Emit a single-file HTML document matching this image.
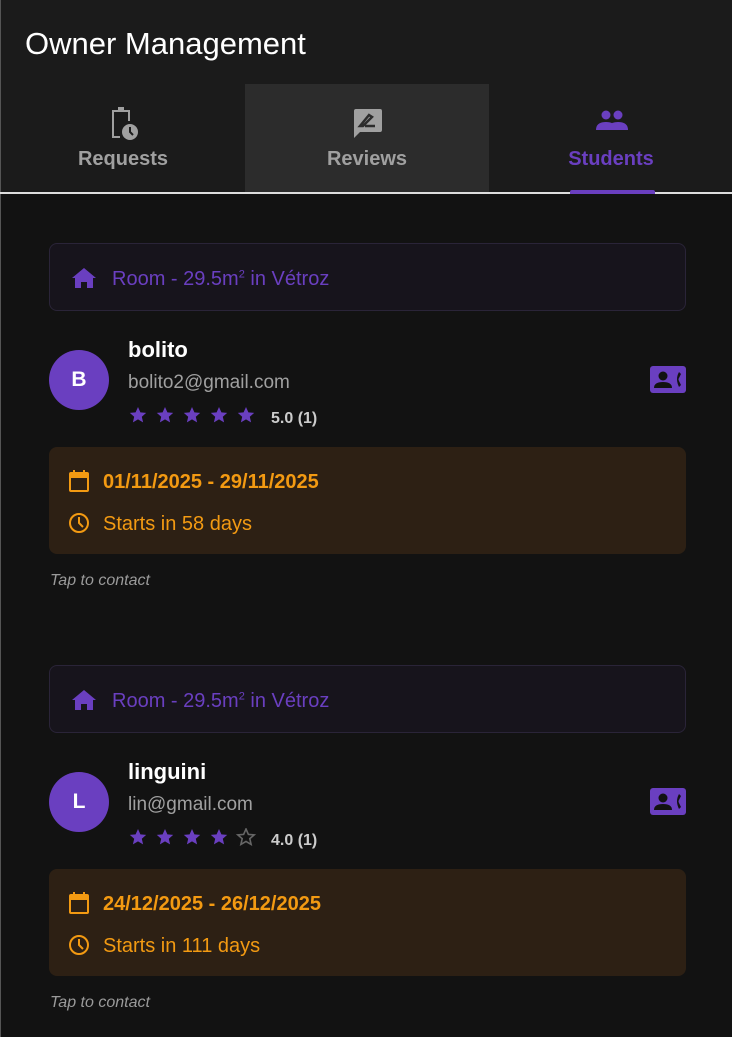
<!DOCTYPE html>
<html><head><style>
*{margin:0;padding:0;box-sizing:border-box}
body{width:732px;height:1037px;background:#121212;font-family:"Liberation Sans",sans-serif;position:relative;overflow:hidden}
.abs{position:absolute}
.hdr{left:0;top:0;width:732px;height:193px;background:#1b1b1b}
.title{left:25px;top:26px;font-size:31px;color:#fff}
.tab{top:84px;height:108px;width:244px;text-align:center}
.tab .lb{position:absolute;left:0;right:0;top:64px;font-size:20px;font-weight:bold}
.room{left:49px;width:637px;height:68px;background:#17141c;border:1px solid #2a2438;border-radius:8px}
.room span{position:absolute;left:62px;top:24px;font-size:20px;color:#6a3fc0}
.av{left:49px;width:60px;height:60px;border-radius:50%;background:#6a3fc0;color:#fff;font-weight:bold;font-size:21px;text-align:center;line-height:60px}
.name{left:128px;font-size:22px;font-weight:bold;color:#fff}
.mail{left:128px;font-size:19px;color:#a0a0a0}
.rt{left:271px;font-size:16px;font-weight:bold;color:#ccc}
.dbox{left:49px;width:637px;height:107px;background:#2d2014;border-radius:8px}
.dbox .t{position:absolute;left:54px;font-size:20px;color:#f39a12}
.tap{left:50px;font-size:16px;font-style:italic;color:#9a9a9a}
</style></head><body>
<svg width="0" height="0" style="position:absolute"><defs><path id="st" d="M9 1l2.4 5.4 5.8.5-4.4 3.8 1.3 5.7L9 13.4l-5.1 3 1.3-5.7L.8 6.9l5.8-.5z"/></defs></svg>
<div class="abs hdr"></div>
<div class="abs" style="left:0;top:0;width:1px;height:1037px;background:#555"></div>
<div class="abs title">Owner Management</div>
<div class="abs tab" style="left:1px;color:#a0a0a0">
<svg class="abs" style="left:107px;top:22px" width="32" height="34" viewBox="0 0 32 34"><path d="M4 4h6V1h6v3h6v11h-2V6H6v24h6v2H4z" fill="#a0a0a0"/><circle cx="22" cy="26" r="8" fill="#a0a0a0"/><path d="M22 21v5l3 3" stroke="#1b1b1b" stroke-width="2" fill="none"/></svg>
<div class="lb">Requests</div></div>
<div class="abs tab" style="left:245px;background:#2c2c2c;color:#a0a0a0">
<svg class="abs" style="left:106px;top:22px" width="32" height="34" viewBox="0 0 32 34"><path d="M3 5q0-2 2-2h24q2 0 2 2v19q0 2-2 2H9l-6 6z" fill="#a0a0a0"/><path d="M9 20l9-11 3 2-9 9zM14 20h10" stroke="#2c2c2c" stroke-width="2.5" fill="none"/></svg>
<div class="lb">Reviews</div></div>
<div class="abs tab" style="left:489px;color:#6a3fc0">
<svg class="abs" style="left:106px;top:26px" width="34" height="24" viewBox="0 0 34 24"><circle cx="11" cy="5" r="4.5" fill="#6a3fc0"/><circle cx="23" cy="5" r="4.5" fill="#6a3fc0"/><path d="M1 20q0-8 10-8t10 8zM20 20q0-5-3-7q3-1 6-1q10 0 10 8z" fill="#6a3fc0"/></svg>
<div class="lb">Students</div></div>
<div class="abs" style="left:0;top:192px;width:732px;height:2px;background:#ddd"></div>
<div class="abs" style="left:570px;top:190px;width:85px;height:4px;background:#6a3fc0;border-radius:2px 2px 0 0"></div>

<!-- card 1 -->
<div class="abs room" style="top:243px"><svg class="abs" style="left:22px;top:24px" width="24" height="20" viewBox="0 0 24 20"><path d="M12 0L0 10h3v10h6v-6h6v6h6V10h3z" fill="#6a3fc0"/></svg><span>Room - 29.5m<sup style="font-size:11px">2</sup> in Vétroz</span></div>
<div class="abs av" style="top:350px">B</div>
<div class="abs name" style="top:337px">bolito</div>
<div class="abs mail" style="top:372px">bolito2@gmail.com</div>
<svg class="abs" style="left:129px;top:406px" width="135" height="18"><use href="#st" fill="#6a3fc0"/><use href="#st" x="27" fill="#6a3fc0"/><use href="#st" x="54" fill="#6a3fc0"/><use href="#st" x="81" fill="#6a3fc0"/><use href="#st" x="108" fill="#6a3fc0"/></svg>
<div class="abs rt" style="top:410px">5.0 (1)</div>
<div class="abs" style="left:650px;top:366px;width:36px;height:27px;background:#6a3fc0;border-radius:3px"><svg width="36" height="27" viewBox="0 0 36 27"><circle cx="13" cy="10" r="4.5" fill="#121212"/><path d="M4 22q0-6 9-6t9 6z" fill="#121212"/><path d="M29 6q-4 7 0 15l2-2-2-4q-1-2 0-3l2-4z" fill="#121212"/></svg></div>
<div class="abs dbox" style="top:447px">
<svg class="abs" style="left:20px;top:23px" width="20" height="22" viewBox="0 0 20 22"><rect x="1" y="3" width="18" height="18" rx="1" fill="none" stroke="#f39a12" stroke-width="2"/><rect x="1" y="3" width="18" height="5" fill="#f39a12"/><rect x="4" y="0" width="2" height="4" fill="#f39a12"/><rect x="14" y="0" width="2" height="4" fill="#f39a12"/></svg>
<div class="t" style="top:24px;font-weight:bold">01/11/2025 - 29/11/2025</div>
<svg class="abs" style="left:19px;top:65px" width="22" height="22" viewBox="0 0 22 22"><circle cx="11" cy="11" r="9" fill="none" stroke="#f39a12" stroke-width="2"/><path d="M11 5v6l4 4" stroke="#f39a12" stroke-width="2" fill="none"/></svg>
<div class="t" style="top:66px">Starts in 58 days</div></div>
<div class="abs tap" style="top:572px">Tap to contact</div>

<!-- card 2 -->
<div class="abs room" style="top:665px"><svg class="abs" style="left:22px;top:24px" width="24" height="20" viewBox="0 0 24 20"><path d="M12 0L0 10h3v10h6v-6h6v6h6V10h3z" fill="#6a3fc0"/></svg><span>Room - 29.5m<sup style="font-size:11px">2</sup> in Vétroz</span></div>
<div class="abs av" style="top:772px">L</div>
<div class="abs name" style="top:759px">linguini</div>
<div class="abs mail" style="top:794px">lin@gmail.com</div>
<svg class="abs" style="left:129px;top:828px" width="135" height="18"><use href="#st" fill="#6a3fc0"/><use href="#st" x="27" fill="#6a3fc0"/><use href="#st" x="54" fill="#6a3fc0"/><use href="#st" x="81" fill="#6a3fc0"/><use href="#st" x="108" fill="none" stroke="#666" stroke-width="1.6"/></svg>
<div class="abs rt" style="top:832px">4.0 (1)</div>
<div class="abs" style="left:650px;top:788px;width:36px;height:27px;background:#6a3fc0;border-radius:3px"><svg width="36" height="27" viewBox="0 0 36 27"><circle cx="13" cy="10" r="4.5" fill="#121212"/><path d="M4 22q0-6 9-6t9 6z" fill="#121212"/><path d="M29 6q-4 7 0 15l2-2-2-4q-1-2 0-3l2-4z" fill="#121212"/></svg></div>
<div class="abs dbox" style="top:869px">
<svg class="abs" style="left:20px;top:23px" width="20" height="22" viewBox="0 0 20 22"><rect x="1" y="3" width="18" height="18" rx="1" fill="none" stroke="#f39a12" stroke-width="2"/><rect x="1" y="3" width="18" height="5" fill="#f39a12"/><rect x="4" y="0" width="2" height="4" fill="#f39a12"/><rect x="14" y="0" width="2" height="4" fill="#f39a12"/></svg>
<div class="t" style="top:24px;font-weight:bold">24/12/2025 - 26/12/2025</div>
<svg class="abs" style="left:19px;top:65px" width="22" height="22" viewBox="0 0 22 22"><circle cx="11" cy="11" r="9" fill="none" stroke="#f39a12" stroke-width="2"/><path d="M11 5v6l4 4" stroke="#f39a12" stroke-width="2" fill="none"/></svg>
<div class="t" style="top:66px">Starts in 111 days</div></div>
<div class="abs tap" style="top:994px">Tap to contact</div>
</body></html>
